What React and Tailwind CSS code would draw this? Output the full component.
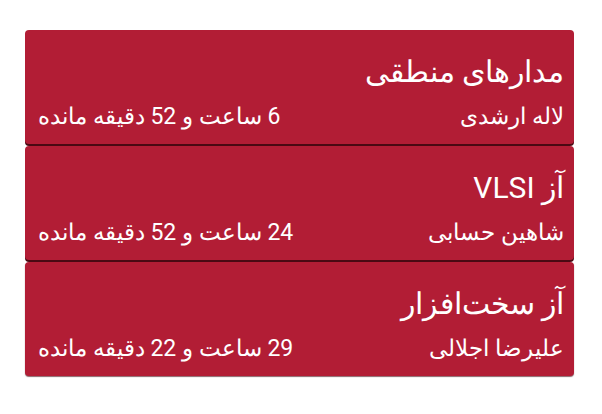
const items = [
  { title: "مدارهای منطقی", teacher: "لاله ارشدی", time: "6 ساعت و 52 دقیقه مانده" },
  { title: "آز VLSI", teacher: "شاهین حسابی", time: "24 ساعت و 52 دقیقه مانده" },
  { title: "آز سخت‌افزار", teacher: "علیرضا اجلالی", time: "29 ساعت و 22 دقیقه مانده" },
];

export default function App() {
  return (
    <div className="w-[602px] h-[414px] bg-white pt-[30px] pl-[25px] pr-[28px]" style={{ fontFamily: "Roboto, 'Noto Sans', sans-serif" }}>
      <div dir="rtl" className="flex flex-col gap-[2px]">
        {items.map((it, i) => (
          <div
            key={i}
            className={
              "h-[114px] rounded-[4px] bg-[#b21d35] text-white pr-[10px] pl-[13px] pt-[22px] " +
              (i < items.length - 1 ? "shadow-[0_2px_0_#4a0913]" : "shadow-[0_1px_1px_rgba(60,0,10,0.6)]")
            }
          >
            <div className="text-[30px] leading-[40px]">{it.title}</div>
            <div className="flex justify-between items-center mt-[10px] text-[23px] leading-[30px]">
              <span>{it.teacher}</span>
              <span>{it.time}</span>
            </div>
          </div>
        ))}
      </div>
    </div>
  );
}
